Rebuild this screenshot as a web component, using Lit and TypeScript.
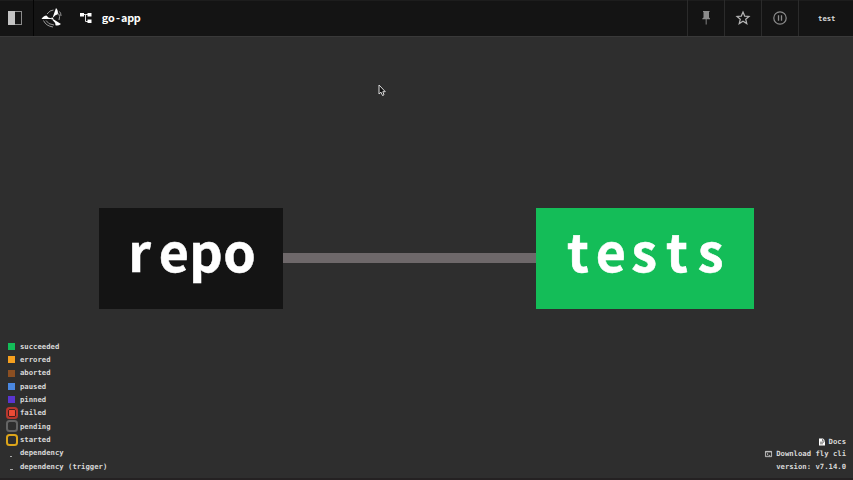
import { LitElement, html, svg, css } from "lit";
import { customElement } from "lit/decorators.js";

const LEGEND = [
  ["succeeded", "#13bd58"],
  ["errored", "#f5a01f"],
  ["aborted", "#8b4f22"],
  ["paused", "#4a87e0"],
  ["pinned", "#5a35d0"],
];
const FRAMED = ["failed", "pending", "started"];

@customElement("app-root")
export class AppRoot extends LitElement {
  static styles = css`
    :host {
      display: flex;
      flex-direction: column;
      position: relative;
      box-sizing: border-box;
      width: 853px;
      height: 480px;
      overflow: hidden;
      background: #2e2e2e;
      border-bottom: 2px solid #242122;
      color: #d8d8d8;
      font: 700 7.25px/13.33px "DejaVu Sans Mono", monospace;
    }
    svg { display: block; flex: none; overflow: visible; }
    .bar {
      display: flex;
      height: 37px;
      box-sizing: border-box;
      background: #141414;
      border-bottom: 1px solid #393939;
      box-shadow: inset 0 1px #1d1d1d;
    }
    .cell {
      display: flex;
      align-items: center;
      justify-content: center;
      box-sizing: border-box;
      width: 36.7px;
      border-left: 1px solid #2b2b2b;
    }
    .toggle { width: 34px; border-left: 0; border-right: 1px solid #050505; padding-right: 3px; }
    .logo { border-left: 0; width: 35px; }
    .crumb { display: flex; align-items: center; flex: 1; padding-left: 11px; gap: 9px; }
    .user { width: 55.5px; padding: 1px 0 0 2px; }
    .graph { display: flex; align-items: center; margin: 171px 0 0 98.5px; height: 101px; }
    .node { height: 101px; background: #141414; }
    .tests { background: #14bd58; }
    .edge { width: 253px; height: 10px; margin-bottom: 1px; background: #6e686a; }
    .glyphs {
      font: 700 52px "Noto Sans CJK JP", "Noto Sans", sans-serif;
      fill: #fff;
      stroke: #fff;
      stroke-width: 0.5px;
      text-anchor: middle;
    }
    .name { font-size: 10.8px; stroke: none; }
    .footer { display: flex; justify-content: space-between; align-items: flex-end; margin-top: auto; padding: 0 7px 5px 5px; }
    .row { display: flex; align-items: center; height: 13.33px; gap: 1px; }
    .mark { display: flex; align-items: center; justify-content: center; width: 14px; height: 13.33px; }
    .swatch { width: 7px; height: 7px; margin-right: 1px; }
    .frame { width: 12px; height: 12px; box-sizing: border-box; border: 2px solid #646464; border-radius: 3.5px; }
    .failed { border-color: #b8372e; background: #ed4b35; box-shadow: inset 0 0 0 1px #42201f; }
    .started { border-color: #dca51b; }
    .dash { width: 3px; height: 1px; background: #aaa; margin: 6px 2px 0 0; }
    .dot { width: 1.5px; }
    .info { display: flex; flex-direction: column; align-items: flex-end; }
    .link { display: flex; align-items: center; gap: 4px; height: 12.6px; }
    .cursor { position: absolute; left: 378px; top: 84px; }
  `;

  node(cls: string, word: string, width: number, xs: string) {
    return html`<div class="node ${cls}">
      <svg width=${width} height="101">${svg`<text class="glyphs" x=${xs} y="64">${word}</text>`}</svg>
    </div>`;
  }

  render() {
    return html`
      <div class="bar">
        <div class="cell toggle">
          <svg width="16" height="16"><rect x="1.5" y="1.5" width="13" height="13" fill="none" stroke="#8b8b8b"/><rect x="1" y="1" width="7" height="14" fill="#c4c4c4"/></svg>
        </div>
        <div class="cell logo">
          <svg width="22" height="22" viewBox="0 0 22 22">
            <path d="M12 9.5 15 1Q17.5 3.5 16.8 7.2Q14.5 7.5 12 10.5ZM10 12 .5 12Q2.5 8.5 5.5 8.5Q7 11 10 11.2ZM12 12 20 17Q17 19.2 14.5 18.2Q14.5 15.5 11.5 13Z" fill="#fff"/>
            <circle cx="11.2" cy="11.5" r="1.1" fill="#fff"/>
            <path d="M6 7Q9 3 12.5 3M17.5 6.5Q19.5 9.5 18 13M2.5 13.5Q5 19 12 20M5 13.5Q7 17.5 13 18M18.5 4.5Q20 6 20 9" fill="none" stroke="#aaa" stroke-width=".9"/>
          </svg>
        </div>
        <div class="crumb">
          <svg width="12" height="12"><path d="M4 2.5H8M5.5 2.5V9.5H8" fill="none" stroke="#ddd"/><path d="M0 1H4V4.5H0ZM7.5 1H11.5V4.5H7.5ZM7.5 7.5H11.5V11H7.5Z" fill="#fff"/></svg>
          <svg width="40" height="18"><text class="glyphs name" x="4 10.5 17 23.3 29.8 36.2" y="13">go-app</text></svg>
        </div>
        <div class="cell">
          <svg width="12" height="16"><path d="M3 1H9.5V2H9V7.5L10 8.5V9.3H6.6V14.5H5.7V9.3H2.3V8.5L3.5 7.5V2H3Z" fill="#8c8c8c"/></svg>
        </div>
        <div class="cell">
          <svg width="16" height="16"><path d="M8 2 9.7 6.1 14 6.4 10.7 9.2 11.8 13.6 8 11.2 4.2 13.6 5.3 9.2 2 6.4 6.3 6.1Z" fill="none" stroke="#b4b4b4" stroke-width="1.2"/></svg>
        </div>
        <div class="cell">
          <svg width="16" height="16"><circle cx="8" cy="8" r="6.2" fill="none" stroke="#8c8c8c" stroke-width="1.2"/><path d="M6.5 5.3V10.7M9.5 5.3V10.7" stroke="#8c8c8c" stroke-width="1.3"/></svg>
        </div>
        <div class="cell user">test</div>
      </div>

      <div class="graph">
        ${this.node("", "repo", 184.5, "40.5 74.8 107 140.5")}
        <div class="edge"></div>
        ${this.node("tests", "tests", 218, "42 74.8 108 141 174.5")}
      </div>

      <div class="footer">
        <div>
          ${LEGEND.map(([label, color]) => html`<div class="row"><span class="mark"><span class="swatch" style="background:${color}"></span></span>${label}</div>`)}
          ${FRAMED.map((label) => html`<div class="row"><span class="mark"><span class="frame ${label}"></span></span>${label}</div>`)}
          <div class="row"><span class="mark"><span class="dash dot"></span></span>dependency</div>
          <div class="row"><span class="mark"><span class="dash"></span></span>dependency (trigger)</div>
        </div>
        <div class="info">
          <div class="link">
            <svg width="6" height="8"><path d="M0 .5H4L6 2.5V7.5H0Z" fill="#fff"/><path d="M1 4.2H5M1 5.8H4M3.6 1V3H6" fill="none" stroke="#444" stroke-width=".7"/></svg>Docs
          </div>
          <div class="link">
            <svg width="7" height="8" viewBox="0 0 8 8"><path d="M.5 1H7.5V7H.5ZM.5 1.6H7.5M2 3 3.5 4.3 2 5.6M4.2 5.6H6" fill="none" stroke="#ddd" stroke-width=".9"/></svg>Download fly cli
          </div>
          <div class="link">version: v7.14.0</div>
        </div>
      </div>

      <svg class="cursor" width="9" height="13" viewBox="0 0 9 13"><path d="M1 1V10L3 8.2 4.5 11.5 6 10.8 4.8 7.7H7.3Z" fill="#111" stroke="#ddd"/></svg>
    `;
  }
}
